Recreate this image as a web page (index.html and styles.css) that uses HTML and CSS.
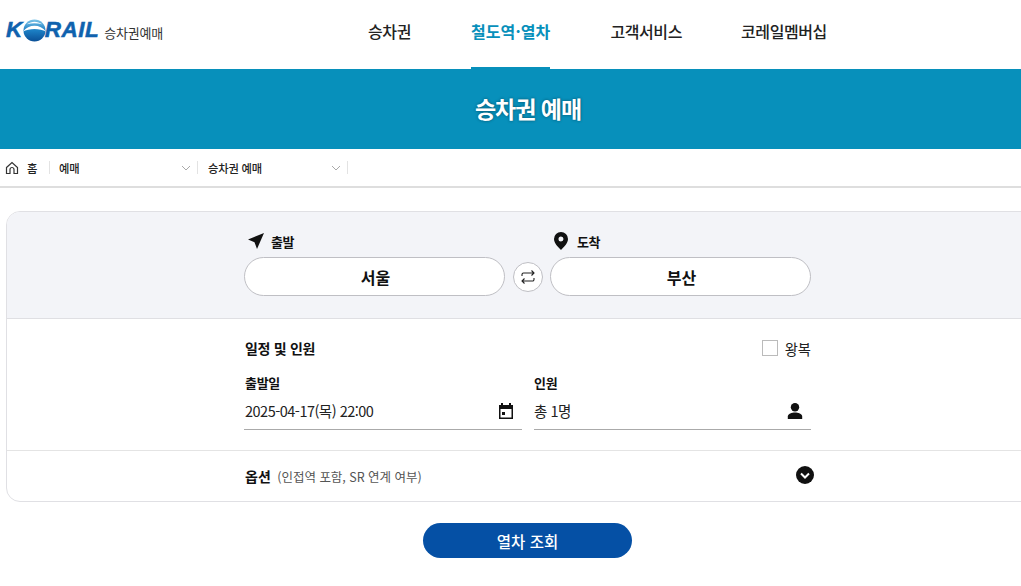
FILE: index.html
```html
<!DOCTYPE html>
<html lang="ko">
<head>
  <meta charset="UTF-8">
  <meta name="viewport" content="width=device-width, initial-scale=1.0">
  <title>승차권 예매</title>
  <link rel="stylesheet" href="styles.css">
</head>
<body>
  <div class="page">
    <header class="top">
      <a class="logo" href="#">
        <span class="logo-word">K<svg class="logo-o" viewBox="0 0 24 24" width="23" height="23"><defs><linearGradient id="globe" x1="0" y1="0" x2="0" y2="1"><stop offset="0" stop-color="#7cc4e8"/><stop offset="0.5" stop-color="#1c7fc4"/><stop offset="1" stop-color="#0a4f96"/></linearGradient></defs><circle cx="12" cy="12" r="11.500" fill="url(#globe)"/><path d="M0 13C6 5 18 5 24 13 18 9.500 6 9.500 0 13Z" fill="#fff"/><path d="M4 5.500C9 2 15 2 20 5.500 15 4 9 4 4 5.500Z" fill="#fff"/></svg>RAIL</span>
        <span class="logo-sub">승차권예매</span>
      </a>
      <nav class="gnb">
        <a href="#">승차권</a>
        <a href="#" class="on">철도역·열차</a>
        <a href="#">고객서비스</a>
        <a href="#">코레일멤버십</a>
      </nav>
    </header>

    <div class="banner"><h1>승차권 예매</h1></div>

    <div class="crumbs">
      <a class="crumb-home" href="#">
        <svg viewBox="0 0 14 14" width="14" height="14" fill="none" stroke="#333" stroke-width="1.2"><path d="M1.500 6.500 7 1.500l5.500 5v6H9V8.500a2 2 0 0 0-4 0v4H1.500z"/></svg>
        홈
      </a>
      <a class="crumb-sel" href="#">예매<svg class="chev" viewBox="0 0 10 6" width="10" height="6" fill="none" stroke="#aaa"><path d="M1 1l4 4 4-4"/></svg></a>
      <a class="crumb-sel" href="#">승차권 예매<svg class="chev" viewBox="0 0 10 6" width="10" height="6" fill="none" stroke="#aaa"><path d="M1 1l4 4 4-4"/></svg></a>
    </div>

    <main class="card">
      <section class="route">
        <div class="inner route-grid">
          <div class="place">
            <div class="place-label">
              <svg viewBox="0 0 16 16" width="16" height="16"><path d="M16 0 0 6.500l6.500 2.700L9 16z" fill="#111"/></svg>
              출발
            </div>
            <button class="place-btn">서울</button>
          </div>
          <button class="swap">
            <svg viewBox="0 0 16 16" width="16" height="16" fill="none" stroke="#222" stroke-width="1.100"><path d="M2 7V5.500A1.500 1.500 0 0 1 3.500 4H14M11.500 1.500 14 4l-2.500 2.500M14 9v1.500a1.500 1.500 0 0 1-1.500 1.500H2M4.500 9.500 2 12l2.500 2.500"/></svg>
          </button>
          <div class="place">
            <div class="place-label">
              <svg viewBox="0 0 16 18" width="16" height="18"><path fill-rule="evenodd" d="M8 0a7 7 0 0 1 7 7c0 4-4 8-7 11-3-3-7-7-7-11a7 7 0 0 1 7-7zm0 4.500a2.500 2.500 0 1 0 0 5 2.500 2.500 0 0 0 0-5z" fill="#111"/></svg>
              도착
            </div>
            <button class="place-btn">부산</button>
          </div>
        </div>
      </section>

      <section class="schedule">
        <div class="inner">
          <div class="schedule-head">
            <h2>일정 및 인원</h2>
            <label class="round"><span class="check"></span>왕복</label>
          </div>
          <div class="fields">
            <div class="field">
              <div class="field-label">출발일</div>
              <div class="field-value">2025-04-17(목) 22:00
                <svg viewBox="0 0 16 16" width="16" height="16"><path fill-rule="evenodd" d="M3 0h2v2h6V0h2v2h2v14H1V2h2zm-.500 6v8.500h11V6zM4 9h3v3H4z" fill="#111"/></svg>
              </div>
            </div>
            <div class="field">
              <div class="field-label">인원</div>
              <div class="field-value">총 1명
                <svg viewBox="0 0 16 16" width="16" height="16"><circle cx="8" cy="4.200" r="4.200" fill="#111"/><path d="M.800 16v-2.500C.800 11 5 9.600 8 9.600s7.200 1.400 7.200 3.900V16z" fill="#111"/></svg>
              </div>
            </div>
          </div>
        </div>
      </section>

      <section class="option">
        <div class="inner option-row">
          <div class="option-text"><strong>옵션</strong> <span>(인접역 포함, SR 연계 여부)</span></div>
          <svg class="option-arrow" viewBox="0 0 18 18" width="18" height="18"><circle cx="9" cy="9" r="9" fill="#111"/><path d="M5 7.500l4 4 4-4" fill="none" stroke="#fff" stroke-width="2"/></svg>
        </div>
      </section>
    </main>

    <div class="actions"><button class="search">열차 조회</button></div>
  </div>
</body>
</html>
```

FILE: styles.css
```css
html, body { margin: 0; padding: 0; background: #fff; overflow: hidden; }
body { font-family: "Noto Sans CJK KR", "Noto Sans", sans-serif; color: #111; height: 586px; }
a { color: inherit; text-decoration: none; }
button { font-family: inherit; cursor: pointer; }
h1, h2 { margin: 0; }

.page { width: 1056px; }

/* header */
.top { height: 69px; display: flex; align-items: stretch; padding-left: 6px; box-sizing: border-box; }
.logo { width: 362px; display: flex; align-items: center; flex: none; padding-bottom: 8px; box-sizing: border-box; }
.logo-word { font-family: "Liberation Sans", sans-serif; font-style: italic; font-weight: bold; font-size: 22.500px; color: #0f62ae; display: flex; align-items: center; letter-spacing: 0.500px; line-height: 1; -webkit-text-stroke: 0.500px #0f62ae; }
.logo-o { margin: 0 -1px 0 0; }
.logo-sub { font-size: 13px; color: #333; margin-left: 5px; letter-spacing: -0.200px; padding-top: 3px; }
.gnb { display: flex; gap: 59px; }
.gnb a { font-size: 16px; font-weight: 500; line-height: 63px; height: 69px; box-sizing: border-box; color: #222; letter-spacing: -0.400px; }
.gnb a.on { color: #0790bb; font-weight: 700; letter-spacing: 0.100px; margin: 0 1px; border-bottom: 2px solid #0790bb; }

/* banner */
.banner { height: 80px; background: #0790bb; display: flex; align-items: center; justify-content: center; }
.banner h1 { color: #fff; font-size: 23px; font-weight: 700; letter-spacing: -1px; line-height: 1; padding-bottom: 2px; text-shadow: 0 0 3px rgba(0,0,0,.45); }

/* breadcrumb */
.crumbs { height: 37px; border-bottom: 2px solid #dedede; display: flex; align-items: center; padding-left: 5px; font-size: 11.300px; font-weight: 500; color: #222; letter-spacing: -0.200px; }
.crumb-home { display: flex; align-items: center; gap: 8px; width: 44px; height: 13px; border-right: 1px solid #e3e3e3; }
.crumb-sel { display: flex; align-items: center; justify-content: space-between; height: 13px; width: 132px; padding: 0 6px 0 9px; border-right: 1px solid #e3e3e3; }
.crumb-sel + .crumb-sel { width: 133px; padding-left: 10px; }
.chev { flex: none; }

/* card */
.card { margin: 23px 6px 0; border: 1px solid #e0e0e4; border-radius: 14px; overflow: hidden; }
.inner { width: 567px; margin-left: 237px; }
.route { background: #f3f4f8; height: 106px; border-bottom: 1px solid #dfdfe3; }
.route-grid { display: flex; align-items: flex-end; height: 84px; gap: 7px; }
.place:first-child { flex: 0 0 261px; margin-right: 1px; }
.place:last-child { flex: 0 0 261px; }
.place-label { display: flex; align-items: center; gap: 7px; font-size: 13px; font-weight: 700; margin-bottom: 6px; height: 20px; padding-left: 4px; letter-spacing: -0.500px; }
.place:last-child .place-label { gap: 8px; padding-left: 3px; }
.place-btn { width: 100%; height: 39px; padding: 0 0 0 2px; background: #fff; border: 1px solid #bfbfc4; border-radius: 20px; font-size: 16px; font-weight: 700; color: #111; }
.swap { flex: none; width: 30px; height: 30px; padding: 0; background: #fff; border: 1px solid #bfbfc4; border-radius: 50%; display: flex; align-items: center; justify-content: center; margin-bottom: 4px; }

.schedule { height: 131px; border-bottom: 1px solid #e4e4e4; }
.schedule-head { display: flex; justify-content: space-between; align-items: center; padding: 18px 0 0 1px; height: 22px; }
.schedule-head h2 { font-size: 14px; font-weight: 700; letter-spacing: -0.300px; }
.round { display: flex; align-items: center; gap: 7px; font-size: 14.300px; color: #222; }
.check { width: 16px; height: 16px; box-sizing: border-box; border: 1px solid #bbb; background: #fff; }
.fields { display: grid; grid-template-columns: 278px 277px; gap: 12px; margin-top: 15px; }
.field:first-child .field-label, .field:first-child .field-value { padding-left: 1px; }
.field-label { font-size: 13px; font-weight: 700; letter-spacing: -0.300px; height: 18px; line-height: 18px; }
.field-value { display: flex; justify-content: space-between; align-items: center; height: 38px; border-bottom: 1px solid #aaa; font-size: 14.500px; color: #222; letter-spacing: -0.500px; padding-right: 8px; box-sizing: border-box; }

.option { height: 50px; }
.option-row { display: flex; justify-content: space-between; align-items: center; height: 50px; padding: 0 0 2px 1px; box-sizing: border-box; }
.option-row strong { font-size: 14px; font-weight: 700; }
.option-row span { font-size: 12.500px; color: #555; margin-left: 2px; letter-spacing: -0.020px; }
.option-arrow { margin-right: -3px; }

.actions { display: flex; justify-content: center; margin-top: 21px; padding-right: 2px; }
.search { width: 209px; height: 35px; padding: 0 0 0 1px; background: #0550a5; color: #fff; border: none; border-radius: 18px; font-size: 15.500px; font-weight: 500; }
```
